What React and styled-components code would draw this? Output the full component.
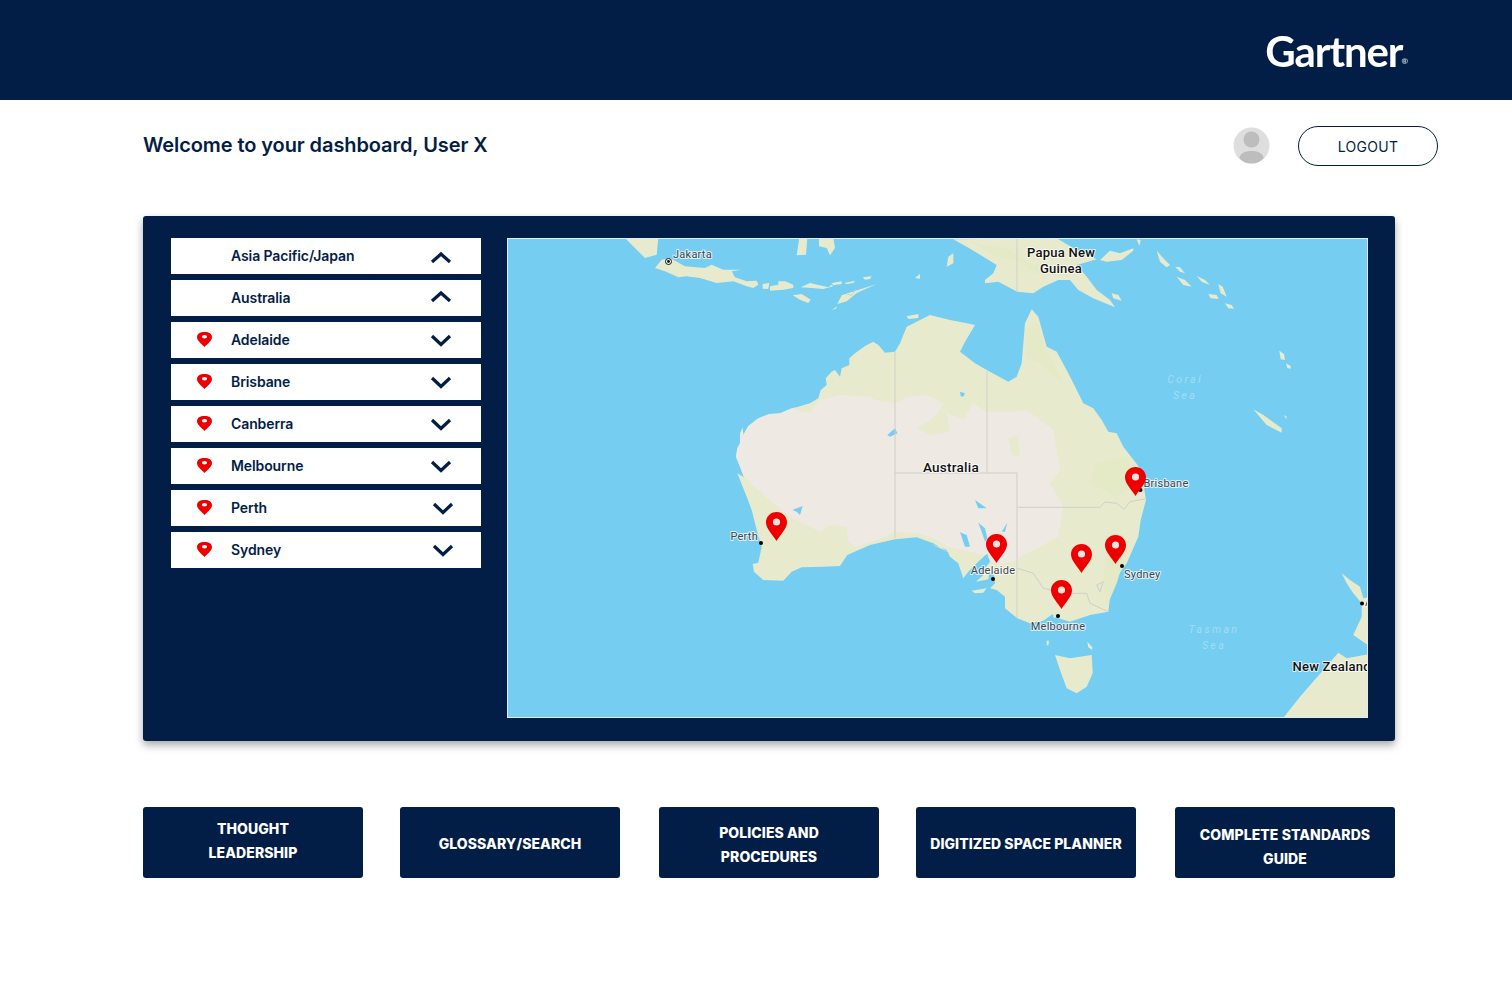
import React from "react";
import styled, { createGlobalStyle } from "styled-components";

const NAVY = "#031e46";

const GlobalStyle = createGlobalStyle`
  html, body {
    margin: 0;
    padding: 0;
    background: #fff;
    font-family: Inter, "Liberation Sans", sans-serif;
    color: ${NAVY};
  }
`;

const Header = styled.header`
  height: 100px;
  background: ${NAVY};
  display: flex;
  align-items: center;
  justify-content: flex-end;
  padding-right: 104px;
`;
const Logo = styled.div`
  display: flex;
  align-items: flex-end;
  color: #fff;
  font-family: Lato, sans-serif;
  font-size: 42px;
  line-height: 44px;
  font-weight: 700;
  letter-spacing: -1.1px;
  filter: blur(0.5px);
  margin-top: 2px;
  & sup {
    font-size: 8px;
    line-height: 8px;
    letter-spacing: 0;
    margin: 0 0 8px -1px;
    opacity: 0.8;
  }
`;
const Main = styled.main`
  padding: 26px 74px 0 143px;
`;
const TopRow = styled.div`
  display: flex;
  align-items: center;
  height: 40px;
`;
const Welcome = styled.h1`
  margin: 0 auto 0 0;
  font-size: 20px;
  line-height: 38px;
  font-weight: 600;
  letter-spacing: -0.09px;
  padding-bottom: 2px;
`;
const Avatar = styled.svg`
  width: 37px;
  height: 37px;
  margin-right: 28px;
  margin-bottom: 1px;
`;
const Logout = styled.button`
  width: 140px;
  height: 40px;
  box-sizing: border-box;
  border: 1px solid ${NAVY};
  border-radius: 20px;
  background: #fff;
  color: ${NAVY};
  font-family: Inter, sans-serif;
  font-size: 14px;
  letter-spacing: 0.3px;
  cursor: pointer;
`;
const Panel = styled.section`
  width: 1252px;
  height: 525px;
  box-sizing: border-box;
  margin-top: 50px;
  padding: 22px 27px 23px 28px;
  background: ${NAVY};
  border-radius: 3px;
  box-shadow: 0 4px 8px rgba(0, 0, 0, 0.35);
  display: flex;
  justify-content: space-between;
`;
const List = styled.ul`
  list-style: none;
  margin: 0;
  padding: 0;
  width: 310px;
  display: flex;
  flex-direction: column;
  gap: 6px;
`;
const Row = styled.li`
  height: 36px;
  box-sizing: border-box;
  padding: 0 0 2px 60px;
  background: #fff;
  display: flex;
  align-items: center;
  position: relative;
  font-size: 14px;
  font-weight: 600;
  letter-spacing: -0.1px;
`;
const RowPin = styled.svg`
  position: absolute;
  left: 26px;
  top: 10px;
  width: 15px;
  height: 15px;
`;
const Chevron = styled.svg`
  margin-left: auto;
  margin-right: ${(p) => (p.$far ? 27 : 29)}px;
  width: 22px;
  height: 13px;
  margin-top: ${(p) => p.$lift || 2}px;
`;
const MapFrame = styled.div`
  width: 861px;
  height: 480px;
  box-sizing: border-box;
  border: 1px solid #dfeef5;
  overflow: hidden;
  background: #75cef1;
  & svg {
    display: block;
    width: 859px;
    height: 478px;
  }
`;
const Land = styled.path`
  fill: #e8eacd;
`;
const Desert = styled.path`
  fill: #efe9e3;
`;
const Lush = styled.path`
  fill: #e4e9c6;
`;
const Water = styled.path`
  fill: #75cef1;
`;
const Border = styled.path`
  fill: none;
  stroke: #cfcfca;
  stroke-width: 1;
`;
const MapLabel = styled.text`
  font-family: Roboto, sans-serif;
  font-size: ${(p) => p.$size || 11}px;
  font-weight: ${(p) => (p.$major ? 500 : 400)};
  fill: ${(p) => (p.$major ? "#111" : "#3d4650")};
  letter-spacing: 0.25px;
  text-anchor: ${(p) => p.$anchor || "start"};
  stroke: #fff;
  stroke-width: 2px;
  stroke-opacity: 0.75;
  paint-order: stroke;
  stroke-linejoin: round;
`;
const SeaLabel = styled.text`
  font-family: Roboto, sans-serif;
  font-style: italic;
  font-size: 10.5px;
  letter-spacing: 2.4px;
  fill: #a4dcf3;
  text-anchor: middle;
`;
const Shortcuts = styled.nav`
  display: flex;
  gap: 37px;
  margin-top: 66px;
`;
const Shortcut = styled.a`
  width: 220px;
  height: 71px;
  box-sizing: border-box;
  padding: ${(p) => p.$top || 0}px ${(p) => p.$pad || 10}px ${(p) => p.$bottom || 0}px;
  background: ${NAVY};
  border-radius: 3px;
  color: #fff;
  display: flex;
  align-items: center;
  justify-content: center;
  text-align: center;
  font-size: 14px;
  line-height: 24px;
  font-weight: 800;
  letter-spacing: 0.08px;
  &:nth-child(3),
  &:nth-child(5) {
    margin-left: 2px;
  }
`;

// coast points were read off 3x crops of the map, each crop has its own origin
const ORIGINS = {
  west: [500, 230],
  east: [930, 230],
  wa: [730, 340],
  sa: [930, 500],
  java: [620, 238],
};
const screen = (crop, pts) => {
  const [ox, oy] = ORIGINS[crop];
  const out = [];
  for (let i = 0; i < pts.length; i += 2) {
    out.push((ox + pts[i] / 3).toFixed(1) + " " + (oy + pts[i + 1] / 3).toFixed(1));
  }
  return out;
};
const open = (crop, pts) => "M" + screen(crop, pts).join("L");
const trace = (crop, pts) => open(crop, pts) + "Z";

const australia =
  "M" +
  [
    ...screen("wa", [
      495, 35, 465, 38, 445, 15, 430, 5, 405, 18, 375, 40, 358, 55, 358, 75, 335, 85, 330, 110, 315, 90, 305, 95, 287, 115,
      290, 135, 272, 150, 265, 175, 240, 190, 205, 200, 185, 205, 150, 220, 118, 222, 85, 235, 55, 258, 40, 285, 38, 262,
      30, 280, 30, 310, 22, 325, 18, 350, 30, 380, 42, 412, 22, 400, 30, 420, 50, 470, 65, 510, 80, 570, 95, 620, 85, 668,
      68, 672, 72, 695, 100, 720, 160, 722, 185, 695, 215, 682, 280, 680, 330, 678, 352, 645, 420, 615, 495, 598, 560, 592,
      610, 610, 660, 640,
    ]),
    ...screen("sa", [
      0, 130, 50, 150, 60, 170, 85, 190, 100, 235, 115, 215, 140, 190, 172, 160, 180, 185, 165, 205, 160, 225, 138, 245,
      175, 238, 178, 215, 192, 225, 195, 250, 180, 265, 200, 270, 225, 290, 225, 325, 262, 355, 300, 370, 340, 362, 368, 342,
      372, 355, 390, 345, 385, 355, 420, 365, 480, 345, 535, 335, 545, 250, 590, 190, 625, 110, 632, 60, 648, 0,
    ]),
    ...screen("east", [
      640, 760, 630, 715, 580, 650, 560, 610, 535, 605, 515, 570, 490, 535, 460, 520, 415, 430, 380, 365, 350, 350, 325, 260,
      305, 238, 285, 280, 275, 400, 260, 440, 235, 455, 170, 420, 135, 400, 90, 365, 105, 335, 135, 285, 110, 280, 60, 270,
      0, 255,
    ]),
    ...screen("west", [1220, 290, 1200, 340]),
  ].join("L") +
  "Z";

const desert =
  "M" +
  [
    ...screen("wa", [
      10, 300, 55, 258, 85, 235, 118, 222, 150, 220, 185, 205, 215, 215, 240, 215, 270, 180, 330, 165, 420, 170, 435, 180,
      500, 190, 530, 170, 590, 165, 640, 190, 630, 210, 600, 240, 560, 265, 600, 285, 660, 275,
    ]),
    ...screen("east", [
      50, 550, 100, 570, 130, 520, 170, 545, 240, 545, 290, 540, 370, 600, 390, 720, 360, 760, 400, 830,
    ]),
    ...screen("sa", [395, 50, 385, 110, 330, 140, 270, 170, 262, 180, 200, 195, 165, 165, 100, 150, 50, 140, 0, 125]),
    ...screen("wa", [
      660, 620, 600, 590, 560, 580, 495, 575, 440, 600, 375, 620, 355, 605, 350, 560, 300, 555, 270, 575, 230, 555, 180, 530,
      130, 490, 80, 445, 42, 412, 0, 380,
    ]),
  ].join("L") +
  "Z";

const queensPatch = trace("east", [235, 625, 265, 615, 270, 680, 245, 675]);

const lands = [
  trace("java", [15, 0, 115, 0, 110, 50, 75, 60, 50, 35]),
  trace("java", [105, 90, 125, 65, 150, 60, 195, 85, 255, 90, 275, 80, 310, 95, 365, 95, 335, 100, 345, 118, 380, 130, 410, 128, 415, 140, 400, 150, 380, 145, 340, 130, 290, 135, 240, 120, 200, 115, 175, 118, 135, 100]),
  trace("java", [428, 138, 448, 135, 445, 153, 428, 152]),
  trace("java", [450, 145, 475, 140, 475, 130, 495, 130, 520, 140, 520, 150, 490, 155, 450, 158]),
  trace("java", [542, 148, 570, 135, 625, 148, 635, 140, 640, 145, 610, 153, 575, 150]),
  trace("java", [635, 135, 665, 130, 665, 138, 640, 142]),
  trace("java", [672, 135, 705, 128, 700, 135, 680, 138]),
  trace("java", [728, 118, 755, 115, 750, 123, 735, 125]),
  trace("java", [518, 172, 545, 168, 572, 185, 565, 195, 540, 185]),
  trace("java", [652, 198, 665, 172, 770, 138, 710, 165, 680, 190]),
  trace("java", [636, 215, 652, 205, 648, 212]),
  trace("java", [530, 52, 538, 0, 562, 0, 558, 50]),
  trace("java", [597, 0, 640, 0, 645, 30, 630, 52, 620, 30, 597, 25]),
  trace("java", [860, 235, 895, 228, 895, 240, 865, 243]),
  trace("java", [885, 120, 900, 108, 900, 122]),
  // papua
  trace("east", [70, 28, 110, 50, 160, 80, 200, 105, 190, 130, 165, 150, 165, 160, 205, 155, 262, 185, 310, 190, 340, 170, 385, 150, 420, 150, 445, 180, 490, 205, 555, 232, 540, 210, 500, 180, 470, 140, 440, 105, 500, 88, 440, 60, 380, 25]),
  trace("east", [510, 90, 540, 62, 570, 70, 610, 55, 610, 62, 575, 90, 530, 95]),
  trace("east", [620, 28, 632, 30, 628, 48]),
  trace("east", [50, 110, 55, 80, 70, 70, 70, 100]),
  trace("east", [545, 190, 565, 195, 575, 212, 550, 205]),
  trace("east", [680, 62, 700, 85, 720, 105, 710, 112, 690, 95]),
  trace("east", [735, 110, 750, 112, 765, 130, 750, 125]),
  trace("east", [740, 140, 765, 150, 785, 170, 760, 165]),
  trace("east", [800, 138, 825, 150, 840, 165, 815, 155]),
  trace("east", [865, 162, 878, 170, 890, 200, 872, 190]),
  trace("east", [835, 192, 860, 195, 866, 207, 842, 205]),
  trace("east", [885, 220, 905, 225, 912, 236, 895, 235]),
  trace("east", [1048, 362, 1062, 372, 1065, 390, 1052, 388]),
  trace("east", [1068, 400, 1082, 408, 1082, 416, 1072, 414]),
  trace("east", [970, 538, 1000, 555, 1055, 595, 1055, 608, 1010, 585]),
  trace("east", [1062, 555, 1070, 560, 1068, 568]),
  trace("sa", [125, 272, 170, 265, 160, 278, 135, 280]),
  trace("east", [375, 1275, 420, 1285, 485, 1275, 488, 1330, 470, 1370, 440, 1390, 410, 1375, 390, 1320]),
  trace("east", [350, 1232, 357, 1232, 355, 1247, 350, 1245]),
  trace("east", [472, 1235, 487, 1252, 487, 1260, 475, 1252]),
  trace("east", [1235, 1030, 1260, 1050, 1290, 1070, 1300, 1105, 1320, 1100, 1320, 1250, 1270, 1215, 1295, 1160, 1295, 1120, 1270, 1090, 1250, 1060]),
  trace("east", [1320, 1272, 1320, 1470, 1055, 1470, 1110, 1400, 1180, 1320, 1225, 1268, 1250, 1285]),
];

const lakes = [
  trace("wa", [472, 285, 495, 265, 502, 280, 480, 290]),
  trace("wa", [187, 510, 218, 498, 210, 525, 200, 515]),
  trace("east", [90, 485, 105, 490, 100, 500, 92, 498]),
  trace("sa", [135, 0, 170, 25, 145, 25]),
  trace("sa", [145, 68, 165, 85, 172, 115, 165, 125, 155, 95]),
  trace("sa", [90, 97, 110, 105, 120, 140, 105, 140]),
  trace("sa", [232, 68, 215, 95, 225, 95]),
];

const borders = [
  "M895 352V538",
  "M895 473H1017",
  "M1017 473V618",
  "M987 371V473",
  "M1017 238V292",
  open("east", [262, 832, 510, 832, 525, 816, 560, 820, 582, 838, 600, 815, 648, 806]),
  open("sa", [262, 205, 310, 220, 340, 265, 400, 280, 470, 280, 480, 310, 535, 335]),
  trace("sa", [500, 255, 520, 245, 510, 275]),
  open("java", [680, 168, 695, 172, 707, 155]),
];

const PIN = "M10.5 0C4.7 0 0 4.6 0 10.3 0 17 7 23 10.5 29 14 23 21 17 21 10.3 21 4.6 16.3 0 10.5 0Z";

const pins = [
  [766, 512],
  [1125, 467],
  [986, 534],
  [1071, 544],
  [1105, 535],
  [1051, 580],
];

const cities = [
  [761, 543],
  [1140.5, 490],
  [993, 579],
  [1122, 566],
  [1058, 616],
  [1362, 603.5],
];

const AustraliaMap = () => (
  <svg viewBox="508 239 859 478">
    <clipPath id="mainland">
      <path d={australia} />
    </clipPath>
    {lands.map((d, i) => (
      <Land key={i} d={d} />
    ))}
    <Land d={australia} />
    <g clipPath="url(#mainland)">
      <Desert d={desert} />
      <Land d={queensPatch} />
    </g>
    <Lush d={trace("east", [200, 80, 262, 90, 310, 130, 420, 140, 400, 120, 300, 100, 240, 60, 120, 35])} />
    <Lush d={trace("east", [285, 300, 320, 280, 345, 360, 400, 460, 330, 400, 290, 380])} />
    <Lush d={trace("east", [500, 700, 590, 680, 630, 760, 560, 800, 480, 760])} />
    <Lush d={trace("sa", [530, 130, 600, 120, 560, 250, 530, 320, 520, 240])} />
    {lakes.map((d, i) => (
      <Water key={i} d={d} />
    ))}
    {borders.map((d, i) => (
      <Border key={i} d={d} />
    ))}

    <circle cx="668.5" cy="261.5" r="3" fill="#fff" stroke="#111" strokeWidth="1" />
    <circle cx="668.5" cy="261.5" r="1.4" fill="#111" />
    {cities.map(([x, y]) => (
      <circle key={x} cx={x} cy={y} r="2" fill="#000" />
    ))}

    <MapLabel x="673" y="258">Jakarta</MapLabel>
    <MapLabel x="758" y="540" $anchor="end">Perth</MapLabel>
    <MapLabel x="1143.5" y="487">Brisbane</MapLabel>
    <MapLabel x="1124" y="578">Sydney</MapLabel>
    <MapLabel x="993" y="574" $anchor="middle">Adelaide</MapLabel>
    <MapLabel x="1058" y="630" $anchor="middle">Melbourne</MapLabel>
    <MapLabel x="1365" y="606">A</MapLabel>
    <MapLabel x="951" y="472" $size={13.5} $major $anchor="middle">Australia</MapLabel>
    <MapLabel x="1061" y="257" $size={13} $major $anchor="middle">Papua New</MapLabel>
    <MapLabel x="1061" y="273" $size={13} $major $anchor="middle">Guinea</MapLabel>
    <MapLabel x="1292.5" y="671" $size={13} $major>New Zealand</MapLabel>
    <SeaLabel x="1185" y="383">Coral</SeaLabel>
    <SeaLabel x="1185" y="399">Sea</SeaLabel>
    <SeaLabel x="1214" y="633">Tasman</SeaLabel>
    <SeaLabel x="1214" y="649">Sea</SeaLabel>

    {pins.map(([x, y]) => (
      <g key={x} transform={`translate(${x} ${y})`}>
        <path d={PIN} fill="#ee0000" />
        <circle cx="10.5" cy="10" r="3.6" fill="#f3e3dc" />
      </g>
    ))}
  </svg>
);

const PinIcon = () => (
  <RowPin viewBox="0 0 15 15">
    <path d="M7.5 0C3 0 0 1.8 0 5.2 0 8.6 4.6 11.8 7.5 15 10.4 11.8 15 8.6 15 5.2 15 1.8 12 0 7.5 0Z" fill="#ee0000" />
    <ellipse cx="7.5" cy="4.8" rx="2.6" ry="1.8" fill="#fff" />
  </RowPin>
);

const ChevronIcon = ({ up, far, lift }) => (
  <Chevron viewBox="0 0 22 13" $far={far} $lift={lift}>
    <path d={up ? "M2 11 11 3 20 11" : "M2 2 11 10.5 20 2"} fill="none" stroke={NAVY} strokeWidth="3.2" />
  </Chevron>
);

const rows = [
  { name: "Asia Pacific/Japan", up: true, lift: 4 },
  { name: "Australia", up: true, lift: -1 },
  { name: "Adelaide", pin: true },
  { name: "Brisbane", pin: true },
  { name: "Canberra", pin: true },
  { name: "Melbourne", pin: true },
  { name: "Perth", pin: true, far: true },
  { name: "Sydney", pin: true, far: true },
];

const shortcuts = [
  { label: "THOUGHT LEADERSHIP", pad: 50, bottom: 4 },
  { label: "GLOSSARY/SEARCH", top: 2 },
  { label: "POLICIES AND PROCEDURES", pad: 30, top: 4 },
  { label: "DIGITIZED SPACE PLANNER", pad: 4, top: 2 },
  { label: "COMPLETE STANDARDS GUIDE", pad: 14, top: 8 },
];

export default function App() {
  return (
    <>
      <GlobalStyle />
      <Header>
        <Logo>
          Gartner<sup>®</sup>
        </Logo>
      </Header>
      <Main>
        <TopRow>
          <Welcome>Welcome to your dashboard, User X</Welcome>
          <Avatar viewBox="0 0 37 37">
            <circle cx="18.5" cy="18.5" r="18" fill="#dedede" />
            <circle cx="18.5" cy="12.5" r="8" fill="#bdbdbd" />
            <path d="M6.5 31.5C6.5 26.5 11.5 24 18.5 24 25.5 24 30.5 26.5 30.5 31.5 27.5 34.5 23.5 36.5 18.5 36.5 13.5 36.5 9.5 34.5 6.5 31.5Z" fill="#bdbdbd" />
          </Avatar>
          <Logout>LOGOUT</Logout>
        </TopRow>
        <Panel>
          <List>
            {rows.map((r) => (
              <Row key={r.name}>
                {r.pin && <PinIcon />}
                {r.name}
                <ChevronIcon up={r.up} far={r.far} lift={r.lift} />
              </Row>
            ))}
          </List>
          <MapFrame>
            <AustraliaMap />
          </MapFrame>
        </Panel>
        <Shortcuts>
          {shortcuts.map((s) => (
            <Shortcut key={s.label} $pad={s.pad} $top={s.top} $bottom={s.bottom}>
              {s.label}
            </Shortcut>
          ))}
        </Shortcuts>
      </Main>
    </>
  );
}
